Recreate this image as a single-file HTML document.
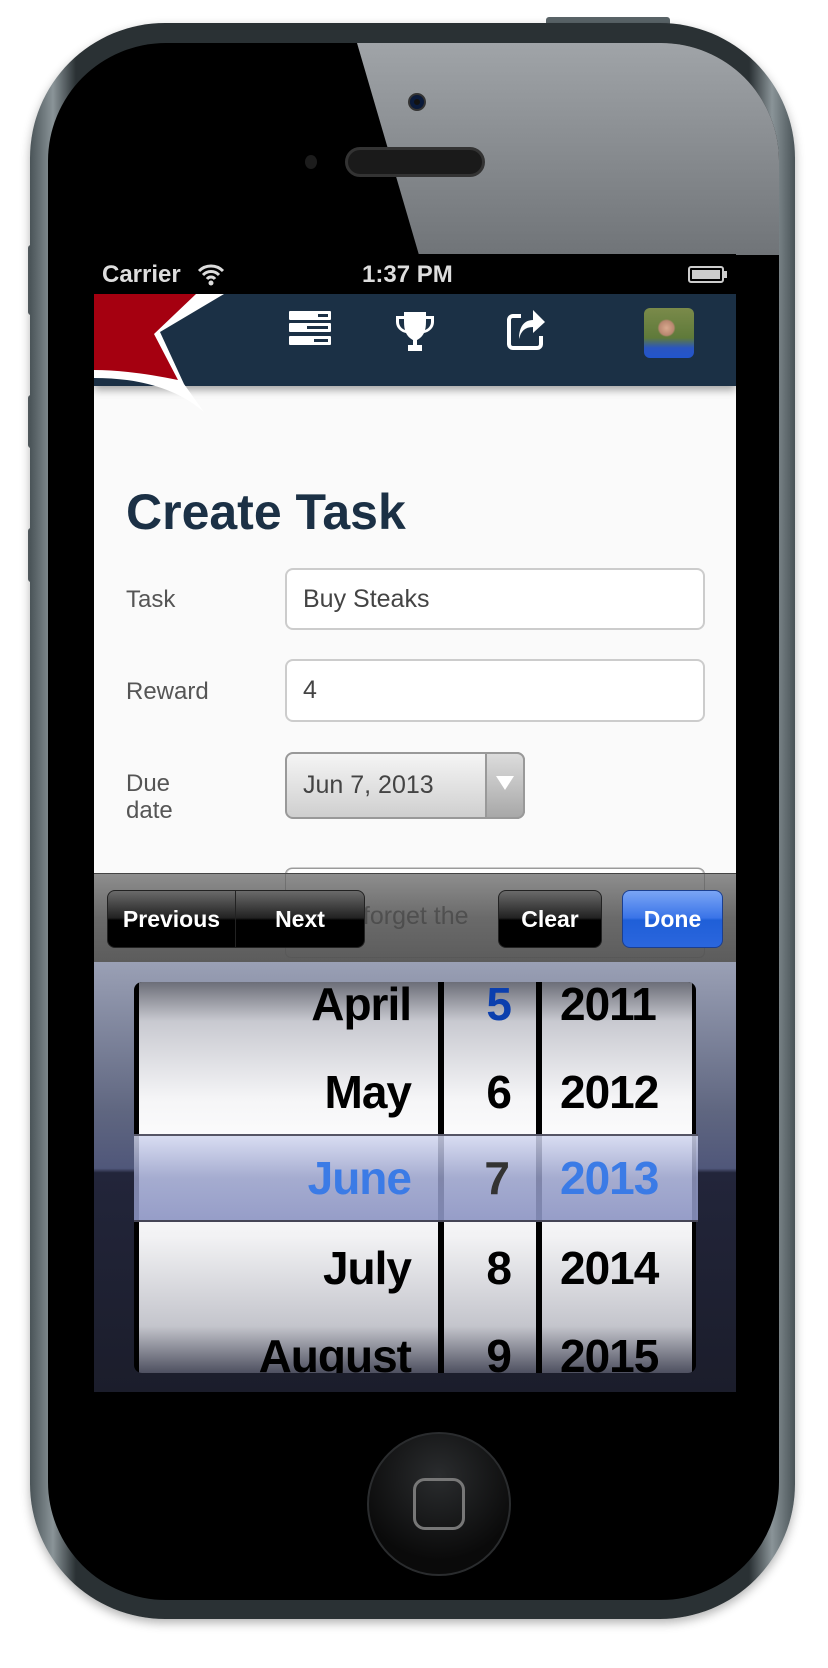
<!DOCTYPE html>
<html><head><meta charset="utf-8"><style>
*{margin:0;padding:0;box-sizing:border-box}
body{width:828px;height:1668px;background:#fff;position:relative;overflow:hidden;font-family:"Liberation Sans",Arial,sans-serif}
.abs{position:absolute}
.phone{left:30px;top:23px;width:765px;height:1596px;border-radius:135px;background:linear-gradient(90deg,#4a5458,#8a9498 3%,#2a3134 6%,#2a3134 94%,#8a9498 97%,#4a5458);box-shadow:0 4px 10px rgba(0,0,0,.3)}
.face{left:48px;top:43px;width:731px;height:1557px;border-radius:118px;background:#000;overflow:hidden}
.btn{background:#5a6468;border-radius:3px}
.status{left:94px;top:254px;width:642px;height:40px;background:#000;color:#ddd;font-weight:bold;font-size:24px}
.nav{left:94px;top:294px;width:642px;height:92px;background:#1b3045;box-shadow:0 4px 8px rgba(0,0,0,.35)}
.content{left:94px;top:386px;width:642px;height:487px;background:#fafafa}
.label{color:#555;font-size:24px}
.input{border:2px solid #ccc;border-radius:8px;background:#fff;font-size:25px;color:#444;padding-left:16px;display:flex;align-items:center}
.toolbar{left:94px;top:873px;width:642px;height:89px;background:linear-gradient(#8e8e8e,#6a6a6a 50%,#5c5c5c);border-top:1px solid #444}
.tb{position:absolute;top:16px;height:58px;border-radius:8px;border:1px solid #222;background:linear-gradient(#6a6a6a,#222 48%,#000 52%,#000);color:#fff;font-weight:bold;font-size:23px;display:flex;align-items:center;justify-content:center}
.picker{left:94px;top:962px;width:642px;height:430px;background:linear-gradient(#9aa0b5,#5f6680 35%,#50577a 48%,#22253a 49%,#1b1d2b)}
.wheel{left:134px;top:982px;width:562px;height:391px;border-radius:8px;overflow:hidden;background:#000}
.col{position:absolute;top:0;height:391px;background:linear-gradient(#6c6e78,#c8c9d0 10%,#f5f5f7 30%,#fff 45%,#f2f2f4 65%,#c4c5cc 88%,#4e5060)}
.row{position:absolute;font-weight:bold;font-size:46px;color:#000;height:88px;line-height:88px;letter-spacing:-1px}
</style></head><body>
<div class="abs btn" style="left:546px;top:17px;width:124px;height:10px"></div>
<div class="abs btn" style="left:28px;top:245px;width:10px;height:70px"></div>
<div class="abs btn" style="left:28px;top:395px;width:10px;height:53px"></div>
<div class="abs btn" style="left:28px;top:528px;width:10px;height:54px"></div>
<div class="abs phone"></div>
<div class="abs face">
 <svg class="abs" style="left:0;top:0" width="731" height="212"><defs><linearGradient id="g" x1="0" y1="0" x2="0" y2="1"><stop offset="0" stop-color="#a0a4a8"/><stop offset="1" stop-color="#707478"/></linearGradient></defs><polygon points="309,0 731,0 731,212 371,212" fill="url(#g)"/></svg>
 <div class="abs" style="left:360px;top:50px;width:18px;height:18px;border-radius:50%;background:#111;border:2px solid #333;box-shadow:inset 0 0 0 4px #0a1a3a"></div>
 <div class="abs" style="left:297px;top:104px;width:140px;height:30px;border-radius:15px;background:#1a1a1a;border:3px solid #333"></div>
 <div class="abs" style="left:257px;top:112px;width:12px;height:14px;border-radius:50%;background:#1c1c1c"></div>
 <div class="abs" style="left:319px;top:1389px;width:144px;height:144px;border-radius:50%;background:radial-gradient(circle at 50% 30%,#2a2c2e,#0a0a0a 70%);border:2px solid #2a2c2e"></div>
 <div class="abs" style="left:365px;top:1435px;width:52px;height:52px;border-radius:12px;border:3px solid #777"></div>
</div>
<div class="abs status"><span class="abs" style="left:8px;top:7px">Carrier</span>
<svg class="abs" style="left:103px;top:8px" width="28" height="24" viewBox="0 0 28 24"><path d="M2 9a17 17 0 0 1 24 0M6 13a11 11 0 0 1 16 0M10 17a5 5 0 0 1 8 0" stroke="#ddd" stroke-width="3" fill="none"/><circle cx="14" cy="21" r="2.5" fill="#ddd"/></svg>
<span class="abs" style="left:268px;top:7px">1:37 PM</span>
<div class="abs" style="left:594px;top:12px;width:36px;height:17px;border:2px solid #ccc;border-radius:3px;padding:2px"><div style="width:100%;height:100%;background:#ccc"></div></div><div class="abs" style="left:630px;top:17px;width:3px;height:7px;background:#ccc"></div></div>
<div class="abs content">
 <div class="abs" style="left:32px;top:97px;font-size:50px;font-weight:bold;color:#1b3045">Create Task</div>
 <div class="abs label" style="left:32px;top:200px">Task</div>
 <div class="abs input" style="left:191px;top:182px;width:420px;height:62px">Buy Steaks</div>
 <div class="abs label" style="left:32px;top:292px">Reward</div>
 <div class="abs input" style="left:191px;top:273px;width:420px;height:63px">4</div>
 <div class="abs label" style="left:32px;top:384px;line-height:27px">Due<br>date</div>
 <div class="abs input" style="left:191px;top:366px;width:240px;height:67px;background:linear-gradient(#f5f5f5,#cfcfcf);border-color:#999">Jun 7, 2013</div>
 <div class="abs" style="left:391px;top:366px;width:40px;height:67px;border-radius:0 8px 8px 0;background:linear-gradient(#dcdcdc,#a8a8a8);border:2px solid #999"></div>
 <div class="abs" style="left:402px;top:390px;width:0;height:0;border-left:9px solid transparent;border-right:9px solid transparent;border-top:14px solid #fff"></div>
 <div class="abs input" style="left:191px;top:481px;width:420px;height:40px;color:#999"></div>
</div>
<div class="abs nav">
 <svg class="abs" style="left:195px;top:17px" width="44" height="34"><rect x="0" y="0" width="42" height="9" rx="1" fill="#fff"/><rect x="0" y="12" width="42" height="9" rx="1" fill="#fff"/><rect x="0" y="25" width="42" height="9" rx="1" fill="#fff"/><rect x="29" y="3" width="10" height="3" fill="#1b3045"/><rect x="18" y="15" width="21" height="3" fill="#1b3045"/><rect x="25" y="28" width="14" height="3" fill="#1b3045"/></svg>
 <svg class="abs" style="left:300px;top:16px" width="42" height="44" viewBox="0 0 42 44"><path d="M10 2h22v4h8v6c0 6-5 10-10 11-2 4-5 6-7 7v5h5v6H14v-6h5v-5c-2-1-5-3-7-7C7 22 2 18 2 12V6h8z M5 9v3c0 4 3 7 6 8-1-3-1-7-1-11z M37 9v3c0 4-3 7-6 8 1-3 1-7 1-11z" fill="#fff" fill-rule="evenodd"/></svg>
 <svg class="abs" style="left:411px;top:14px" width="42" height="44" viewBox="0 0 42 44"><path d="M16 8H8a4 4 0 0 0-4 4v24a4 4 0 0 0 4 4h24a4 4 0 0 0 4-4v-8" stroke="#fff" stroke-width="4" fill="none"/><path d="M28 2l12 12-12 11v-6c-8 0-12 4-14 12 0-12 5-19 14-19z" fill="#fff"/></svg>
 <div class="abs" style="left:550px;top:14px;width:50px;height:50px;border-radius:6px;background:radial-gradient(circle at 45% 40%,#d9a98e 0,#b88770 18%,transparent 22%),linear-gradient(#7a8a4a,#5f7a3a 60%,#2a55c0 80%,#2255cc)"></div>
</div>
<svg class="abs" style="left:94px;top:294px" width="140" height="120" viewBox="0 0 140 120"><path d="M0 0H130L66 38 90 90 110 118C80 92 40 84 0 84z" fill="#fff"/><path d="M0 0H102L60 40 84 86C55 80 25 76 0 76z" fill="#a50010"/></svg>
<div class="abs toolbar">
 <div class="abs" style="left:191px;top:-6px;width:420px;height:90px;border:1px solid rgba(80,80,80,.4);border-radius:6px"></div>
 <div class="abs" style="left:255px;top:28px;color:rgba(60,60,60,.6);font-size:25px">t forget the</div>
 <div class="tb" style="left:13px;width:129px;border-radius:8px 0 0 8px">Previous</div>
 <div class="tb" style="left:141px;width:130px;border-radius:0 8px 8px 0">Next</div>
 <div class="tb" style="left:404px;width:104px">Clear</div>
 <div class="tb" style="left:528px;width:101px;background:linear-gradient(#7aa5f5,#3a74e8 48%,#1f5fd8 52%,#2b66dd);border-color:#1b3f90">Done</div>
</div>
<div class="abs picker"></div>
<div class="abs wheel">
 <div class="col" style="left:5px;width:299px"></div>
 <div class="col" style="left:310px;width:92px"></div>
 <div class="col" style="left:408px;width:150px"></div>
 <div class="row" style="right:285px;top:-22px">April</div>
 <div class="row" style="right:285px;top:66px">May</div>
 <div class="row" style="right:285px;top:242px">July</div>
 <div class="row" style="right:285px;top:330px">August</div>
 <div class="row" style="right:185px;top:-22px;color:#0b3fae">5</div>
 <div class="row" style="right:185px;top:66px">6</div>
 <div class="row" style="right:185px;top:242px">8</div>
 <div class="row" style="right:185px;top:330px">9</div>
 <div class="row" style="left:426px;top:-22px">2011</div>
 <div class="row" style="left:426px;top:66px">2012</div>
 <div class="row" style="left:426px;top:242px">2014</div>
 <div class="row" style="left:426px;top:330px">2015</div>
</div>
<div class="abs" style="left:134px;top:1134px;width:564px;height:88px;background:linear-gradient(rgba(210,215,240,.85),rgba(150,158,200,.85) 50%,rgba(140,148,195,.9));border-top:2px solid #556;border-bottom:2px solid #445"></div>
<div class="abs row" style="right:417px;top:1134px;color:#3b7be6">June</div>
<div class="abs row" style="right:319px;top:1134px;color:#333">7</div>
<div class="abs row" style="left:560px;top:1134px;color:#3b7be6">2013</div>
</body></html>
